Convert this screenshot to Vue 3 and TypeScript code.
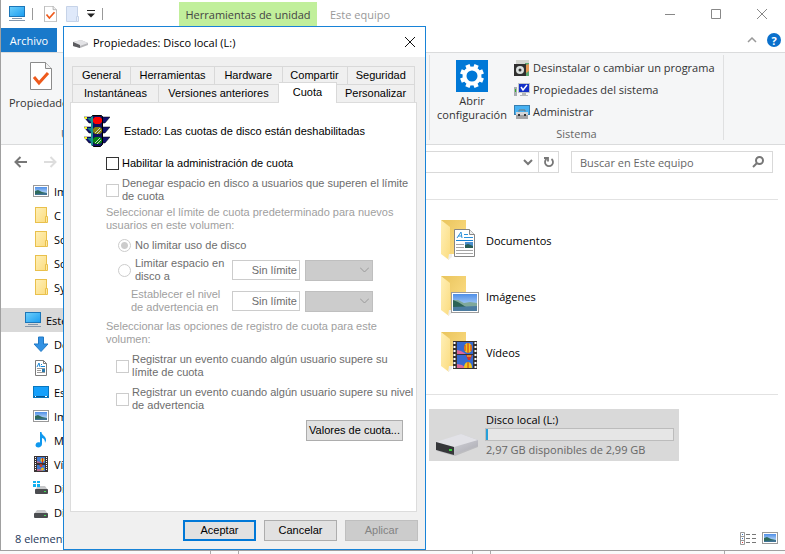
<script setup lang="ts">
import { ref } from 'vue'

interface Entry {
  icon: string
  label: string
}

const pinned: Entry[] = [
  { icon: 'picture', label: 'Imágenes' },
  { icon: 'folder', label: 'C' },
  { icon: 'folder', label: 'Sc' },
  { icon: 'folder', label: 'Sc' },
  { icon: 'folder', label: 'Sy' },
]

const places: Entry[] = [
  { icon: 'download', label: 'Descargas' },
  { icon: 'document', label: 'Documentos' },
  { icon: 'desktop', label: 'Escritorio' },
  { icon: 'picture', label: 'Imágenes' },
  { icon: 'music', label: 'Música' },
  { icon: 'film', label: 'Vídeos' },
  { icon: 'osdrive', label: 'Disco local (C:)' },
  { icon: 'drive', label: 'Disco local (L:)' },
]

const systemActions: Entry[] = [
  { icon: 'uninstall', label: 'Desinstalar o cambiar un programa' },
  { icon: 'sysprops', label: 'Propiedades del sistema' },
  { icon: 'manage', label: 'Administrar' },
]

const folders: Entry[] = [
  { icon: 'bigdoc', label: 'Documentos' },
  { icon: 'bigpic', label: 'Imágenes' },
  { icon: 'bigfilm', label: 'Vídeos' },
]

const backTabs = ['General', 'Herramientas', 'Hardware', 'Compartir', 'Seguridad']
const frontTabs = ['Instantáneas', 'Versiones anteriores', 'Cuota', 'Personalizar']

const activeTab = ref('Cuota')
const enabled = ref(false)
const limitMode = ref('none')
const search = ref('')
const usedPercent = 1
</script>

<template>
  <svg class="defs" aria-hidden="true">
    <defs>
      <linearGradient id="screen" x1="0" y1="0" x2="1" y2="1">
        <stop offset="0" stop-color="#6fd0fb" /><stop offset="1" stop-color="#1a9cf0" />
      </linearGradient>
      <linearGradient id="flap" x1="0" y1="0" x2="1" y2="1">
        <stop offset="0" stop-color="#fff0b8" /><stop offset="1" stop-color="#fbdc80" />
      </linearGradient>
      <linearGradient id="back" x1="0" y1="0" x2="1" y2="1">
        <stop offset="0" stop-color="#e9c45c" /><stop offset="1" stop-color="#ffe08a" />
      </linearGradient>
      <linearGradient id="sky" x1="0" y1="0" x2="0" y2="1">
        <stop offset="0" stop-color="#4f8fe8" /><stop offset="1" stop-color="#d8ecfb" />
      </linearGradient>
      <linearGradient id="metal" x1="0" y1="0" x2="1" y2="1">
        <stop offset="0" stop-color="#e4e4ea" /><stop offset="1" stop-color="#a9a9b0" />
      </linearGradient>
      <symbol id="i-pc" viewBox="0 0 16 16">
        <rect x="0.5" y="0.5" width="15" height="10" fill="url(#screen)" stroke="#1c76b8" />
        <path d="M3 12.5h10M0 14.5h16" stroke="#8597ab" />
      </symbol>
      <symbol id="i-folder" viewBox="0 0 16 16">
        <rect x="2.5" y="0.5" width="11" height="15" fill="url(#flap)" stroke="#e9c04c" />
        <path d="M12.5 15.5v-6h2v6z" fill="#ffe9a0" stroke="#e9c04c" />
      </symbol>
      <symbol id="i-picture" viewBox="0 0 16 16">
        <rect x="0.5" y="2.5" width="15" height="11" fill="#fff" stroke="#999" />
        <rect x="2" y="4" width="12" height="8" fill="url(#sky)" />
        <path d="M2 8l3-1 4 2 5 1v2H2z" fill="#2e6a5c" /><path d="M2 11l12-1v2H2z" fill="#3f7396" />
      </symbol>
      <symbol id="i-download" viewBox="0 0 16 16">
        <path d="M5.5 1h5v7H15l-7 7.5L1 8h4.5z" fill="#3392e3" stroke="#2179c5" />
      </symbol>
      <symbol id="i-document" viewBox="0 0 16 16">
        <path d="M2.5 0.5h8l3 3v12h-11z" fill="#fff" stroke="#7b7b7b" /><path d="M10.5 0.5v3h3" fill="none" stroke="#7b7b7b" />
        <path d="M4 7l2-4 1 4M8 4.5h1M8 6.5h4" stroke="#1686d9" fill="none" />
        <path d="M4 8.5h8M4 10.5h4M4 12.5h8" stroke="#999" /><path d="M9 9h3v3H9z" fill="#2879ae" />
      </symbol>
      <symbol id="i-desktop" viewBox="0 0 16 16">
        <rect x="0.5" y="2.5" width="15" height="11" fill="#16a0fb" stroke="#0876be" />
        <path d="M1 12.5h14" stroke="#075894" /><path d="M2 12.5h1M12 12.5h2" stroke="#fff" />
      </symbol>
      <symbol id="i-music" viewBox="0 0 16 16">
        <path d="M7 0h1.500c0 3.500 5 4 4.500 8.500l-1 2.500c0-3-1-4.500-3-5v6c0 4-6 4.500-6.500 1.500 0-3 2.500-4 4.500-3z" fill="#0f98ee" />
      </symbol>
      <symbol id="i-film" viewBox="0 0 16 16">
        <rect x="1" y="0" width="14" height="16" fill="#3b3434" />
        <path d="M2.5 1v14M13.5 1v14" stroke="#fff" stroke-dasharray="1 1" />
        <path d="M4 1h8v6H4zM4 9h8v6H4z" fill="#3f7ad3" />
        <circle cx="9.5" cy="4" r="2" fill="#efbd1d" /><path d="M9 2h1v5H9z" fill="#ce2c20" />
        <path d="M4 5l3 1v1H4zM4 13l4 0 1 2H4z" fill="#b0688f" /><circle cx="8" cy="9.5" r="1.5" fill="#c73c29" />
        <circle cx="9.5" cy="13" r="1.5" fill="#efbd1d" />
      </symbol>
      <symbol id="i-drive" viewBox="0 0 16 16">
        <path d="M4 6h8l3 4H1z" fill="#c7c8ca" /><rect x="1" y="9" width="14" height="5" rx="1" fill="#4b4d50" />
        <path d="M11 11.5h2" stroke="#43e155" />
      </symbol>
      <symbol id="i-osdrive" viewBox="0 0 16 16">
        <path d="M5 6h7l3 4H2z" fill="#c7c8ca" /><rect x="2" y="9" width="13" height="5" rx="1" fill="#4b4d50" />
        <path d="M11 11.5h2" stroke="#43e155" />
        <path d="M0 1h3v2H0zM4 1h3v2H4zM0 4h3v3H0zM4 4h3v3H4z" fill="#12b0f0" />
      </symbol>
      <symbol id="i-check" viewBox="0 0 22 28">
        <path d="M0.5 0.5h15l6 6v21h-21z" fill="#fff" stroke="#8b8b8b" /><path d="M15.5 0.5v6h6" fill="#f1f1f1" stroke="#8b8b8b" />
        <path d="M4 15l5 6 9-10" fill="none" stroke="#ee5a1c" stroke-width="3" />
      </symbol>
      <symbol id="i-gear" viewBox="0 0 32 32">
        <rect width="32" height="32" fill="#0078d7" />
        <circle cx="16" cy="16" r="7.5" fill="none" stroke="#fff" stroke-width="4" />
        <g stroke="#fff" stroke-width="4.5">
          <path d="M16 8V4M16 28v-4" transform="rotate(22.5 16 16)" /><path d="M16 8V4M16 28v-4" transform="rotate(67.5 16 16)" />
          <path d="M16 8V4M16 28v-4" transform="rotate(112.5 16 16)" /><path d="M16 8V4M16 28v-4" transform="rotate(157.5 16 16)" />
        </g>
      </symbol>
      <symbol id="i-uninstall" viewBox="0 0 16 16">
        <path d="M2 0h13v4H2z" fill="#d4d5d0" /><path d="M11 3h4v13h-4z" fill="#5fa872" /><path d="M12 5l3-1v7l-3 2z" fill="#e39754" />
        <rect x="0" y="4" width="12" height="12" fill="#2f2f2f" /><circle cx="6" cy="10" r="4" fill="#dce1df" />
        <circle cx="6" cy="10" r="1.5" fill="#333" />
      </symbol>
      <symbol id="i-sysprops" viewBox="0 0 16 16">
        <rect x="0" y="5" width="3" height="9" fill="#a8aeb1" /><path d="M1 7h1v3H1z" fill="#35b22f" />
        <rect x="4.5" y="1.5" width="11" height="9" fill="#1330c8" stroke="#bfc4c9" />
        <path d="M7 5l2 3 4-5" stroke="#fff" stroke-width="1.5" fill="none" /><path d="M8 11h4v2h2v1H6v-1h2z" fill="#b3b7ba" />
      </symbol>
      <symbol id="i-manage" viewBox="0 0 16 16">
        <rect x="0.5" y="1.5" width="15" height="9" fill="#46b1f2" stroke="#367eb0" />
        <path d="M5 7.5V6h6v1.500" fill="none" stroke="#777" /><rect x="2" y="8" width="12" height="7" fill="#a4a4a6" />
        <path d="M2 8h12v3H2z" fill="#d5d5d7" /><path d="M4 10h2v2H4zM10 10h2v2h-2z" fill="#343437" />
      </symbol>
      <symbol id="bigfolder" viewBox="0 0 40 42">
        <path d="M1 1h25v34H6z" fill="url(#back)" /><path d="M1 1l9 7v23l-1 10-8-6z" fill="url(#flap)" />
        <path d="M8 41l4-3v-3h-3z" fill="#eee" />
      </symbol>
      <symbol id="i-bigdoc" viewBox="0 0 40 42">
        <use href="#bigfolder" />
        <path d="M14.5 10.5h15l5 5v22h-20z" fill="#fff" stroke="#858585" /><path d="M29.500 10.5v5h5" fill="#eee" stroke="#858585" />
        <path d="M17 19l4-6 1 6M18 17h4M24 15.5h4M24 18.5h9" stroke="#2a91dc" fill="none" />
        <path d="M16 21.5h17" stroke="#1a84d4" /><path d="M16 25.5h8M16 28.5h8M16 31.5h17M16 34.5h17" stroke="#a5a5a5" />
        <path d="M25 23h8v6h-8z" fill="#4b8fce" /><path d="M25 26l3-1 5 2v2h-8z" fill="#295e55" />
      </symbol>
      <symbol id="i-bigpic" viewBox="0 0 40 42">
        <use href="#bigfolder" />
        <rect x="11.5" y="17.5" width="27" height="20" fill="#fff" stroke="#9c9c9c" />
        <rect x="13" y="19" width="24" height="17" fill="url(#sky)" />
        <path d="M13 25l5 0 6 3 6-1 7 1v4H13z" fill="#7fa89a" /><path d="M13 25l5 2 8 5H13z" fill="#2d6355" /><path d="M13 32l24-1v5H13z" fill="#4c7ca0" />
      </symbol>
      <symbol id="i-bigfilm" viewBox="0 0 40 42">
        <use href="#bigfolder" />
        <rect x="13" y="10" width="24" height="28" fill="#363232" />
        <path d="M14.5 11v26M35.5 11v26" stroke="#fff" stroke-width="2" stroke-dasharray="2 2" />
        <path d="M17 11h16v12H17zM17 24h16v13H17z" fill="#3669d0" />
        <path d="M17 19l4 1 5 3h-9zM17 33l5 1 4 3h-9z" fill="#dd6798" />
        <ellipse cx="28" cy="17" rx="4" ry="5" fill="#f1c51c" /><path d="M25 14v6M28 12v10M31 14v6" stroke="#ce2c1c" />
        <path d="M26 24h6l-2 5h-2z" fill="#cf3524" /><path d="M27 25h4" stroke="#f4d23a" />
        <path d="M24 37c0-8 8-8 8 0z" fill="#f1c51c" /><path d="M28 31v6" stroke="#be3a18" />
      </symbol>
    </defs>
  </svg>

  <div class="page">
    <main class="explorer">
      <header class="titlebar">
        <svg class="ico"><use href="#i-pc" /></svg>
        <i class="rule"></i>
        <svg class="mini"><use href="#i-check" /></svg>
        <svg class="mini" viewBox="0 0 13 16"><path d="M.5.5h11v15H.5z" fill="#dfe9fa" stroke="#c6d3e8" /><path d="M10.5 10.5h2v5h-2z" fill="#e9f0fb" stroke="#c6d3e8" /></svg>
        <svg class="more" viewBox="0 0 8 8"><path d="M0 .5h8" stroke="#222" /><path d="M0 3.500h8l-4 4z" fill="#222" /></svg>
        <i class="rule"></i>
        <span class="context">Herramientas de unidad</span>
        <h1>Este equipo</h1>
        <button class="win" aria-label="Minimizar"><svg viewBox="0 0 12 12"><path d="M1 6.5h10" /></svg></button>
        <button class="win" aria-label="Maximizar"><svg viewBox="0 0 12 12"><path d="M1.5 1.5h9v9h-9z" /></svg></button>
        <button class="win" aria-label="Cerrar"><svg viewBox="0 0 12 12"><path d="M1 1l10 10M11 1L1 11" /></svg></button>
      </header>

      <div class="menubar">
        <button class="file">Archivo</button>
        <button class="fold" aria-label="Contraer la cinta"><svg viewBox="0 0 10 6"><path d="M1 5l4-4 4 4" fill="none" stroke="#999" stroke-width="1.5" /></svg></button>
        <button class="help" aria-label="Ayuda">?</button>
      </div>

      <section class="ribbon">
        <div class="group location">
          <button class="big"><svg class="sheet"><use href="#i-check" /></svg>Propiedades</button>
          <span class="caption">Ubicación</span>
        </div>
        <div class="group system">
          <div class="tools">
            <button class="big wide"><svg class="gear"><use href="#i-gear" /></svg><span>Abrir configuración</span></button>
            <div class="stack">
              <button v-for="a in systemActions" :key="a.label"><svg class="ico"><use :href="'#i-' + a.icon" /></svg>{{ a.label }}</button>
            </div>
          </div>
          <span class="caption">Sistema</span>
        </div>
      </section>

      <div class="addressbar">
        <button class="nav-arrow" aria-label="Atrás"><svg viewBox="0 0 13 12"><path d="M13 6H2M6.5 1L1.5 6l5 5" /></svg></button>
        <button class="nav-arrow off" aria-label="Adelante" disabled><svg viewBox="0 0 13 12"><path d="M0 6h11M6.5 1l5 5-5 5" /></svg></button>
        <div class="address">
          <button aria-label="Ubicaciones anteriores"><svg viewBox="0 0 10 8"><path d="M1 2l4 4 4-4" fill="none" stroke="#777" stroke-width="2" /></svg></button>
          <button class="reload" aria-label="Actualizar"><svg viewBox="0 0 12 12"><path d="M8.500 3a4 4 0 1 1-5 0M5 5.500V2H1" fill="none" stroke="#777" stroke-width="1.8" /></svg></button>
        </div>
        <label class="search">
          <input v-model="search" aria-label="Buscar en Este equipo" placeholder="Buscar en Este equipo" />
          <svg viewBox="0 0 12 12"><circle cx="7.500" cy="4.500" r="3.500" /><path d="M5 7l-4 4" /></svg>
        </label>
      </div>

      <div class="body">
        <nav class="tree">
          <a v-for="(p, i) in pinned" :key="i" href="#"><svg class="ico"><use :href="'#i-' + p.icon" /></svg>{{ p.label }}</a>
          <a class="root" href="#"><svg class="ico"><use href="#i-pc" /></svg>Este equipo</a>
          <a v-for="(p, i) in places" :key="'p' + i" href="#"><svg class="ico"><use :href="'#i-' + p.icon" /></svg>{{ p.label }}</a>
        </nav>
        <section class="content">
          <div class="shelf">
            <a v-for="f in folders" :key="f.label" class="folder" href="#"><svg><use :href="'#i-' + f.icon" /></svg>{{ f.label }}</a>
          </div>
          <div class="shelf drives">
            <a class="disk" href="#">
              <svg viewBox="0 0 44 24">
                <path d="M2 18l18 5 23-9v-2l-20 7z" fill="#bdbdc0" />
                <path d="M1 9L26 1l17 6v6L18 22 1 17z" fill="url(#metal)" /><path d="M1 9L26 1l17 6-24 7z" fill="#e2e2e7" />
                <path d="M1 9l18 5v8L1 17z" fill="#36373a" /><path d="M14 17h3" stroke="#38d23e" stroke-width="2" />
              </svg>
              <span class="disk-info">
                <span class="name">Disco local (L:)</span>
                <span class="meter"><i :style="{ width: usedPercent + '%' }"></i></span>
                <span class="name free">2,97 GB disponibles de 2,99 GB</span>
              </span>
            </a>
          </div>
        </section>
      </div>

      <footer class="status">
        <span>8 elementos</span>
        <button aria-label="Detalles"><svg class="list" viewBox="0 0 17 13"><path d="M.5.5h4v12h-4zM.5 4.5h4M.5 8.5h4" fill="#fff" stroke="#999" /><path d="M6 2.5h4M12 2.5h4M6 6.5h4M12 6.5h4M6 10.5h4M12 10.5h4" stroke="#777" /><path d="M2 2h1v1H2zM2 6h1v1H2z" fill="#3470c0" /><path d="M2 10h1v1H2z" fill="#d33" /></svg></button>
        <button aria-label="Iconos grandes"><svg class="ico"><use href="#i-picture" /></svg></button>
      </footer>
    </main>
    <div class="behind"><i></i><i></i><i></i><i></i><i></i></div>

    <section class="dialog" role="dialog" aria-labelledby="dlg-title">
      <header class="dlg-head">
        <svg class="ico" viewBox="0 0 16 16"><path d="M0 8l8-2 7 3v2l-8 3-7-2z" fill="#b6b6b9" /><path d="M0 8l8-2 7 3-8 3z" fill="#e3e3e6" /><path d="M0 8l7 3v3l-7-2z" fill="#5c5c60" /></svg>
        <h2 id="dlg-title">Propiedades: Disco local (L:)</h2>
        <button aria-label="Cerrar"><svg viewBox="0 0 12 12"><path d="M1 1l10 10M11 1L1 11" stroke="#111" /></svg></button>
      </header>

      <div class="dlg-body">
        <div class="tabs" role="tablist">
          <div class="tabrow">
            <button v-for="t in backTabs" :key="t" role="tab" :class="t.toLowerCase()" @click="activeTab = t">{{ t }}</button>
          </div>
          <div class="tabrow">
            <button v-for="t in frontTabs" :key="t" role="tab" :class="[t.split(' ')[0].toLowerCase(), { active: t === activeTab }]" :aria-selected="t === activeTab" @click="activeTab = t">{{ t }}</button>
          </div>
        </div>

        <div class="panel" role="tabpanel">
          <div class="state">
            <svg viewBox="0 0 26 33">
              <path d="M0 2h26l-5 6H5zM0 12h26l-5 6H5zM0 22h26l-5 6H5z" fill="#101070" stroke="#000" stroke-width=".5" />
              <path d="M3 3h4v4zM3 13h4v4zM3 23h4v4z" fill="#158080" />
              <path d="M8.5.5h9l1 1v28l-2 2h-7l-2-2v-28z" fill="#101060" stroke="#000" />
              <path d="M8 1.500v29" stroke="#1a9090" stroke-width="2" />
              <path d="M0 2h3v2H1zM0 12h3v2H1zM0 22h3v2H1z" fill="#f4f020" />
              <path d="M11 2h5l2 2v3l-2 2h-5l-2-2V4z" fill="#f00" /><path d="M11 12h5l2 2v3l-2 2h-5l-2-2v-3z" fill="#84800c" />
              <path d="M11 22h5l2 2v3l-2 2h-5l-2-2v-3z" fill="#078413" /><path d="M11 18l5-5M13 19l4-4M11 28l5-5M13 29l4-4" stroke="#ccc" />
            </svg>
            <span>Estado: Las cuotas de disco están deshabilitadas</span>
          </div>

          <label class="opt"><input v-model="enabled" type="checkbox" />Habilitar la administración de cuota</label>
          <label class="opt off deny"><input type="checkbox" disabled />Denegar espacio en disco a usuarios que superen el límite de cuota</label>
          <p class="hint limit">Seleccionar el límite de cuota predeterminado para nuevos usuarios en este volumen:</p>

          <div class="limits">
            <label class="opt off"><input v-model="limitMode" type="radio" name="limit" value="none" disabled />No limitar uso de disco</label>
            <div class="row">
              <label class="opt off"><input v-model="limitMode" type="radio" name="limit" value="size" disabled />Limitar espacio en disco a</label>
              <input type="text" value="Sin límite" aria-label="Límite de espacio" disabled />
              <span class="combo"><select aria-label="Unidad del límite" disabled><option></option></select><svg viewBox="0 0 9 6"><path d="M0 .5l4.500 4.500L9 .5" /></svg></span>
            </div>
            <div class="row">
              <label class="warn" for="warn">Establecer el nivel de advertencia en</label>
              <input id="warn" type="text" value="Sin límite" disabled />
              <span class="combo"><select aria-label="Unidad de advertencia" disabled><option></option></select><svg viewBox="0 0 9 6"><path d="M0 .5l4.500 4.500L9 .5" /></svg></span>
            </div>
          </div>

          <p class="hint">Seleccionar las opciones de registro de cuota para este volumen:</p>
          <div class="logs">
            <label class="opt off"><input type="checkbox" disabled />Registrar un evento cuando algún usuario supere su límite de cuota</label>
            <label class="opt off"><input type="checkbox" disabled />Registrar un evento cuando algún usuario supere su nivel de advertencia</label>
          </div>
          <button class="btn values">Valores de cuota...</button>
        </div>

        <footer class="actions">
          <button class="btn primary">Aceptar</button>
          <button class="btn">Cancelar</button>
          <button class="btn" disabled>Aplicar</button>
        </footer>
      </div>
    </section>
  </div>
</template>

<style>
body { margin: 0; background: #fff; }
</style>

<style scoped>
* { box-sizing: border-box; }
button { font: inherit; color: inherit; background: none; border: 0; padding: 0; }
a { color: inherit; text-decoration: none; }
h1, h2, p { margin: 0; font-size: inherit; font-weight: 400; }
svg { display: block; flex: none; }
.defs { position: absolute; width: 0; height: 0; }
.ico { width: 16px; height: 16px; }

.page { position: relative; display: flex; flex-direction: column; min-height: 100vh; font: 11px/13px "Open Sans", "Noto Sans", sans-serif; color: #000; overflow: hidden; }
.explorer { flex: 1; display: flex; flex-direction: column; border-left: 1px solid #a0a0a0; border-bottom: 1px solid #a0a0a0; }

.titlebar { display: flex; align-items: center; height: 28px; padding-left: 8px; color: #999; }
.titlebar .rule { width: 1px; height: 12px; margin: 0 11px 0 7px; background: #999; }
.mini { width: 13px; height: 16px; margin-right: 9px; }
.more { width: 8px; height: 8px; margin-left: -1px; }
.context { align-self: flex-end; width: 138px; height: 26px; margin-left: 65px; background: #c1ef9b; color: #444; text-align: center; line-height: 26px; }
.titlebar h1 { flex: 1; padding-left: 13px; }
.win { width: 46px; height: 26px; display: grid; place-items: center; }
.win svg { width: 12px; height: 12px; fill: none; stroke: #888; }

.menubar { display: flex; align-items: center; height: 25px; border-bottom: 1px solid #dadbdc; padding-right: 4px; }
.file { align-self: stretch; width: 56px; background: #1979ca; color: #fff; }
.fold { margin-left: auto; margin-right: 10px; }
.fold svg { width: 10px; height: 6px; }
.help { width: 14px; height: 14px; border-radius: 50%; background: #0a70cc; color: #fff; font-weight: 700; }

.ribbon { display: flex; height: 92px; background: #f5f6f7; border-bottom: 1px solid #dadbdc; color: #333; }
.group { display: flex; flex-direction: column; margin: 2px 0 4px; padding-top: 5px; border-right: 1px solid #dfe0e1; }
.location { flex: 0 0 429px; padding-left: 8px; align-items: flex-start; }
.system { flex: 0 0 294px; align-items: center; }
.tools { display: flex; align-items: flex-start; align-self: stretch; }
.big { display: flex; flex-direction: column; align-items: center; }
.location .big { padding-top: 2px; }
.sheet { width: 22px; height: 28px; margin-bottom: 6px; }
.wide { width: 84px; padding: 0 6px; }
.gear { width: 32px; height: 32px; margin-bottom: 2px; }
.wide span { line-height: 14px; }
.stack { display: flex; flex-direction: column; }
.stack button { display: flex; align-items: center; gap: 3px; height: 22px; white-space: nowrap; line-height: 16px; }
.stack button:first-child { height: 16px; margin-bottom: 3px; }
.caption { margin-top: auto; color: #666; }
.location .caption { margin-left: 52px; }

.addressbar { display: flex; align-items: center; height: 34px; padding: 0 12px 0 13px; }
.nav-arrow { width: 30px; }
.nav-arrow svg { width: 13px; height: 12px; fill: none; stroke: #777; stroke-width: 2; }
.nav-arrow.off svg { stroke: #ddd; }
.address { flex: 1; display: flex; justify-content: flex-end; height: 22px; border: 1px solid #d9d9d9; }
.address button { width: 20px; display: grid; place-items: center; }
.address svg { width: 10px; height: 8px; }
.address .reload { border-left: 1px solid #d9d9d9; }
.address .reload svg { width: 12px; height: 12px; }
.search { display: flex; align-items: center; width: 202px; height: 22px; margin-left: 12px; padding: 0 8px; border: 1px solid #d9d9d9; }
.search input { flex: 1; min-width: 0; border: 0; padding: 0; font: inherit; outline: 0; }
.search input::placeholder { color: #666; opacity: 1; }
.search svg { width: 12px; height: 12px; fill: none; stroke: #777; stroke-width: 2; }

.body { flex: 1; display: flex; }
.tree { flex: 0 0 174px; }
.tree a { display: flex; align-items: center; gap: 5px; height: 24px; padding-left: 32px; white-space: nowrap; }
.tree .root { margin-top: 9px; padding-left: 24px; background: #d9d9d9; }
.content { flex: 1; padding: 20px 7px 0 0; }
.shelf { display: grid; grid-template-columns: 254px 250px; height: 195px; padding-top: 12px; border-top: 1px solid #e2e2e2; align-content: start; }
.shelf > * { grid-column: 2; }
.folder { display: flex; align-items: center; gap: 6px; height: 56px; padding-left: 11px; }
.folder svg { width: 40px; height: 42px; }
.drives { height: auto; padding-top: 14px; }
.disk { display: flex; gap: 6px; height: 52px; padding: 4px 5px 4px 6px; background: #d9d9d9; }
.disk > svg { width: 44px; height: 24px; align-self: flex-end; }
.disk-info { flex: 1; display: flex; flex-direction: column; }
.name { padding-left: 1px; }
.meter { height: 13px; margin: 2px 0; border: 1px solid #bcbcbc; background: #e6e6e6; }
.meter i { display: block; height: 100%; min-width: 2px; background: #26a0da; }
.free { color: #666; }
.status { display: flex; align-items: center; gap: 5px; height: 24px; padding: 0 7px 0 14px; color: #1e395b; }
.status span { flex: 1; }
.list { width: 17px; height: 13px; }

.behind { display: flex; justify-content: flex-end; height: 3px; padding-right: 60px; background: #fafafa; }
.behind i { border-right: 1px solid #aaa; }
.behind i:nth-child(2) { width: 28px; }
.behind i:nth-child(3) { width: 234px; }
.behind i:nth-child(4) { width: 18px; }
.behind i:nth-child(5) { width: 234px; }

.dialog { position: absolute; left: 63px; top: 26px; width: 363px; border: 1px solid #1883d7; background: #f0f0f0; }
.dlg-head { display: flex; align-items: center; height: 30px; padding: 0 9px; background: #fff; }
.dlg-head h2 { flex: 1; margin-left: 4px; }
.dlg-head button svg { width: 12px; height: 12px; }
.dlg-body { padding: 9px 8px 8px 6px; font: 11px/13px "Liberation Sans", Arial, sans-serif; }
.tabs { padding: 0 2px; }
.tabrow { display: flex; height: 18px; }
.tabrow button { flex: 1 1 68px; border: solid #d9d9d9; border-width: 1px 1px 0 0; white-space: nowrap; }
.tabrow button:first-child { border-left-width: 1px; }
.tabrow .general { flex: 0 0 59px; }
.tabrow .herramientas { flex: 0 0 84px; }
.tabrow .compartir { flex: 0 0 65px; }
.tabrow .instantáneas { flex: 0 0 87px; }
.tabrow .versiones { flex: 0 0 120px; }
.tabrow .cuota { flex: 0 0 58px; }
.tabrow .active { margin: -2px 0 -1px; padding-bottom: 2px; background: #fff; z-index: 1; }
.panel { min-height: 410px; padding: 12px 13px 0; border: 1px solid #dcdcdc; background: #fff; }
.state { display: flex; align-items: center; gap: 14px; margin-bottom: 9px; }
.state svg { width: 26px; height: 33px; }
.opt { display: flex; align-items: center; gap: 3px; margin-left: 22px; }
.opt input { appearance: none; flex: none; width: 13px; height: 13px; margin: 0; border: 1px solid #333; background: #fff; }
.opt.off { color: #6d6d6d; }
.opt.off input { border-color: #ccc; }
.opt input[type="radio"] { border-radius: 50%; }
.opt input[type="radio"]:checked { background: radial-gradient(circle, #ccc 3px, #fff 4px); }
.opt.deny { margin-top: 7px; margin-right: -12px; }
.hint { margin: 6px 0 7px 22px; color: #a0a0a0; }
.limit { margin-top: 3px; }
.limits { display: flex; flex-direction: column; gap: 5px; padding-left: 12px; }
.limits .opt { gap: 4px; }
.row { display: flex; align-items: center; }
.row .opt { width: 114px; }
.row .warn { width: 101px; margin-left: 35px; padding-right: 8px; color: #a0a0a0; }
.row > input { width: 68px; height: 20px; padding: 0 2px; border: 1px solid #ccc; background: #fff; color: #6d6d6d; font: inherit; text-align: right; }
.combo { display: grid; align-items: center; margin-left: 5px; }
.combo > * { grid-area: 1 / 1; }
.combo select { appearance: none; width: 68px; height: 21px; border: 1px solid #bfbfbf; background: #ccc; border-radius: 0; opacity: 1; }
.combo svg { z-index: 1; width: 9px; height: 6px; justify-self: end; margin-right: 4px; fill: none; stroke: #999; pointer-events: none; }
.logs { display: flex; flex-direction: column; gap: 7px; padding-left: 10px; margin-right: -12px; }
.btn { width: 73px; height: 21px; border: 1px solid #adadad; background: #e1e1e1; }
.values { display: block; width: 97px; margin: 8px 0 0 auto; white-space: nowrap; }
.actions { display: flex; justify-content: flex-end; gap: 8px; margin-top: 8px; margin-right: -1px; }
.btn.primary { border: 2px solid #0078d7; }
.btn:disabled { border-color: #bfbfbf; background: #ccc; color: #838383; }
</style>
